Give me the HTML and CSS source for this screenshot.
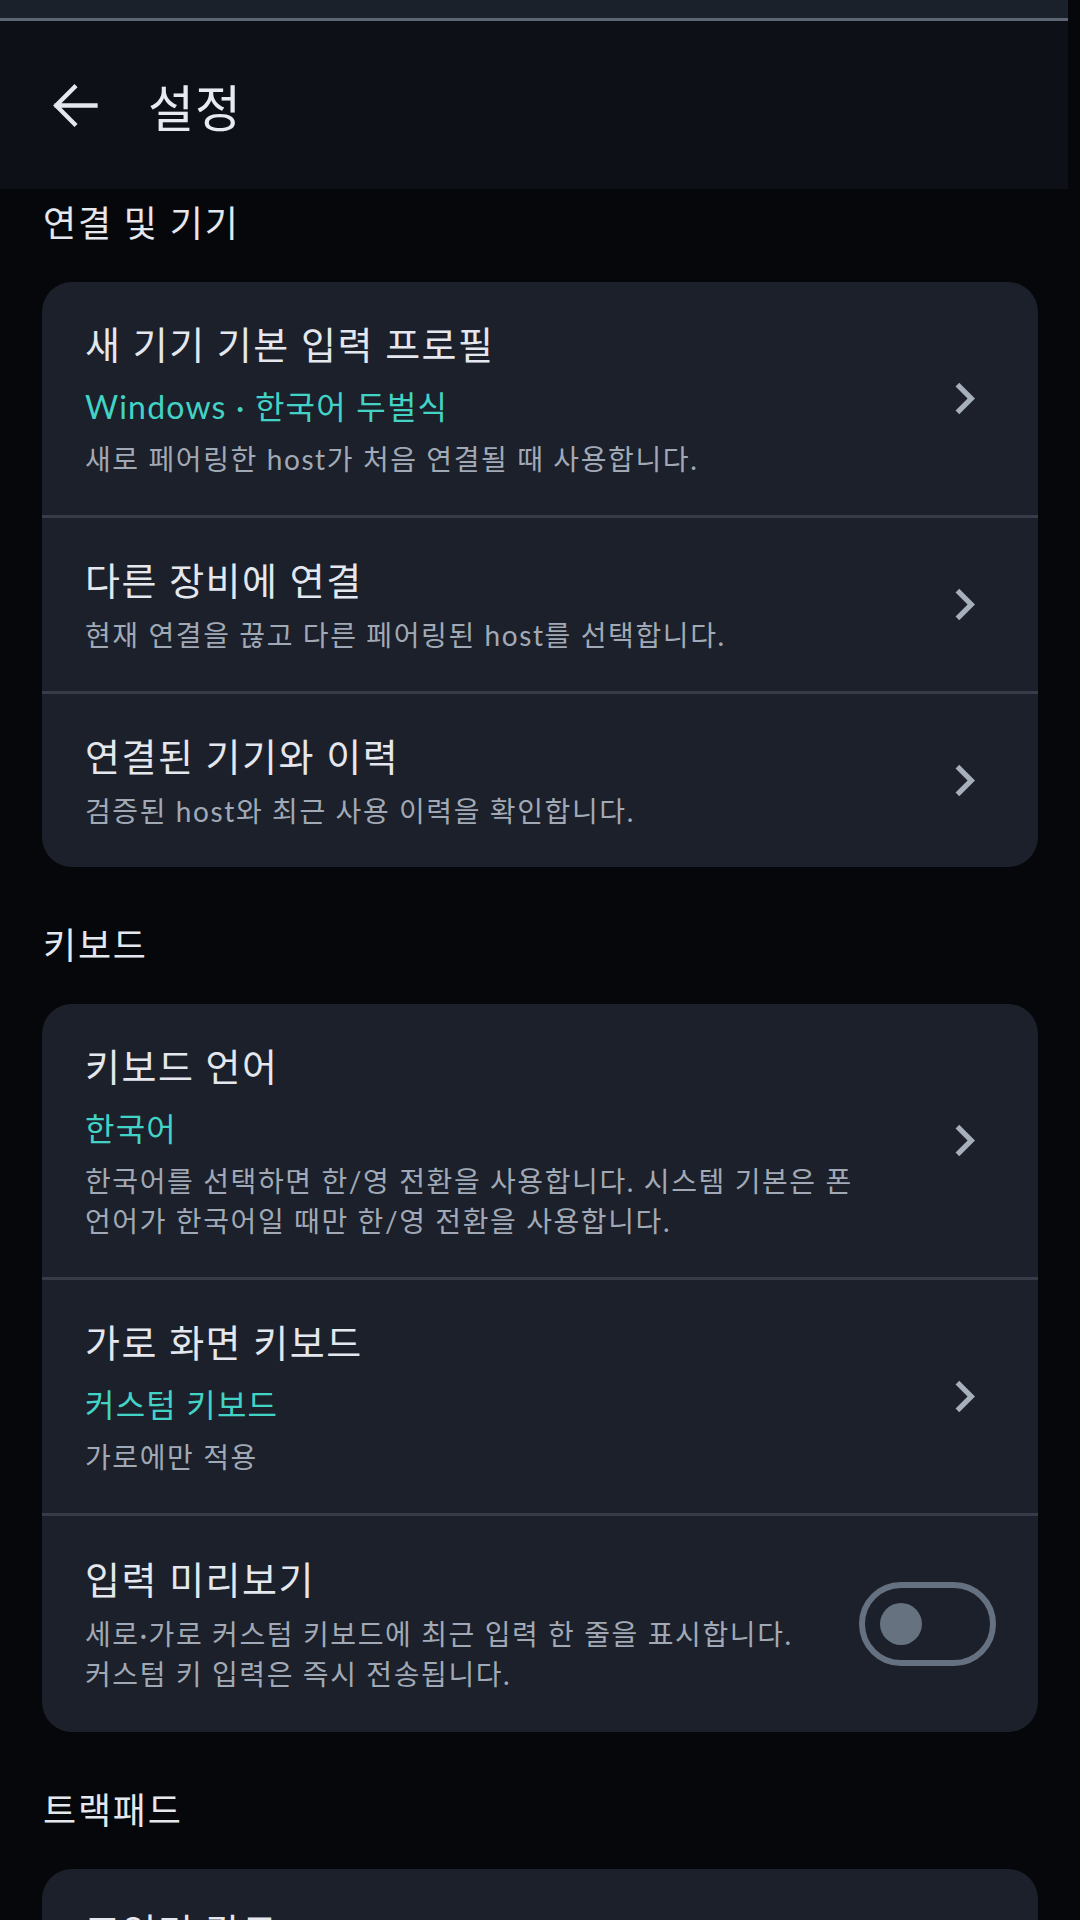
FILE: index.html
```html
<!DOCTYPE html>
<html lang="ko">
<head>
    <meta charset="UTF-8">
    <meta name="viewport" content="width=device-width, initial-scale=1.0">
    <title>설정</title>
    <link rel="stylesheet" href="styles.css">
</head>
<body>
    <div class="topbar">
        <div class="statusbar"></div>
        <header class="appbar">
            <button class="back" aria-label="뒤로">
                <svg viewBox="0 0 24 24" width="63" height="63">
                    <path d="M20 12H5.2M12 5l-7 7 7 7" fill="none" stroke="currentColor" stroke-width="1.65" stroke-linecap="square"/>
                </svg>
            </button>
            <h1>설정</h1>
        </header>
    </div>

    <main class="content">
        <section class="section">
            <h2 class="section-label">연결 및 기기</h2>
            <div class="card">
                <div class="row">
                    <div class="row-text">
                        <div class="row-title">새 기기 기본 입력 프로필</div>
                        <div class="row-value">Windows · 한국어 두벌식</div>
                        <div class="row-desc">새로 페어링한 host가 처음 연결될 때 사용합니다.</div>
                    </div>
                    <svg class="chevron" viewBox="0 0 24 24"><path d="M10 6L8.59 7.41 13.17 12l-4.58 4.59L10 18l6-6z"/></svg>
                </div>
                <div class="row">
                    <div class="row-text">
                        <div class="row-title">다른 장비에 연결</div>
                        <div class="row-desc">현재 연결을 끊고 다른 페어링된 host를 선택합니다.</div>
                    </div>
                    <svg class="chevron" viewBox="0 0 24 24"><path d="M10 6L8.59 7.41 13.17 12l-4.58 4.59L10 18l6-6z"/></svg>
                </div>
                <div class="row">
                    <div class="row-text">
                        <div class="row-title">연결된 기기와 이력</div>
                        <div class="row-desc">검증된 host와 최근 사용 이력을 확인합니다.</div>
                    </div>
                    <svg class="chevron" viewBox="0 0 24 24"><path d="M10 6L8.59 7.41 13.17 12l-4.58 4.59L10 18l6-6z"/></svg>
                </div>
            </div>
        </section>

        <section class="section">
            <h2 class="section-label">키보드</h2>
            <div class="card">
                <div class="row">
                    <div class="row-text">
                        <div class="row-title">키보드 언어</div>
                        <div class="row-value">한국어</div>
                        <div class="row-desc">한국어를 선택하면 한/영 전환을 사용합니다. 시스템 기본은 폰 언어가 한국어일 때만 한/영 전환을 사용합니다.</div>
                    </div>
                    <svg class="chevron" viewBox="0 0 24 24"><path d="M10 6L8.59 7.41 13.17 12l-4.58 4.59L10 18l6-6z"/></svg>
                </div>
                <div class="row">
                    <div class="row-text">
                        <div class="row-title">가로 화면 키보드</div>
                        <div class="row-value">커스텀 키보드</div>
                        <div class="row-desc">가로에만 적용</div>
                    </div>
                    <svg class="chevron" viewBox="0 0 24 24"><path d="M10 6L8.59 7.41 13.17 12l-4.58 4.59L10 18l6-6z"/></svg>
                </div>
                <div class="row toggle-row">
                    <div class="row-text">
                        <div class="row-title">입력 미리보기</div>
                        <div class="row-desc">세로·가로 커스텀 키보드에 최근 입력 한 줄을 표시합니다. 커스텀 키 입력은 즉시 전송됩니다.</div>
                    </div>
                    <div class="switch"><span class="knob"></span></div>
                </div>
            </div>
        </section>

        <section class="section">
            <h2 class="section-label">트랙패드</h2>
            <div class="card">
                <div class="row">
                    <div class="row-text">
                        <div class="row-title">포인터 감도</div>
                        <div class="row-desc">트랙패드에서 커서가 움직이는 속도를 조절합니다.</div>
                    </div>
                    <svg class="chevron" viewBox="0 0 24 24"><path d="M10 6L8.59 7.41 13.17 12l-4.58 4.59L10 18l6-6z"/></svg>
                </div>
            </div>
        </section>
    </main>
</body>
</html>
```

FILE: styles.css
```css
body {
    margin: 0;
    background-color: #05070b;
    font-family: 'Lato', 'Noto Sans CJK KR', sans-serif;
    color: #e4e7ee;
    word-break: keep-all;
}
.topbar {
    margin-right: 12px;
}
.statusbar {
    height: 18px;
    background-color: #1b212b;
    border-bottom: 3px solid #5d6572;
}
.appbar {
    height: 168px;
    display: flex;
    align-items: center;
    gap: 42px;
    padding-left: 43px;
    background-color: #0d1017;
}
.back {
    display: flex;
    padding: 0;
    border: none;
    background: none;
    color: #e4e7ee;
}
.appbar h1 {
    margin: 0;
    font-size: 50px;
    font-weight: 400;
    letter-spacing: 1px;
    color: #e7eaf1;
}
.content {
    padding: 10px 42px 40px;
}
.section + .section {
    margin-top: 54px;
}
.section-label {
    margin: 0 0 35px 1px;
    font-size: 36px;
    line-height: 48px;
    font-weight: 400;
    letter-spacing: 1.8px;
    color: #e4e7ee;
}
.card {
    background-color: #1b202a;
    border-radius: 30px;
    overflow: hidden;
}
.row {
    display: flex;
    align-items: center;
    gap: 32px;
    padding: 36px 42px 36px 43px;
}
.row + .row {
    border-top: 3px solid #353c47;
}
.toggle-row {
    padding-top: 37px;
    padding-bottom: 38px;
}
.row-text {
    flex: 1;
}
.row-title {
    font-size: 38px;
    line-height: 52px;
    letter-spacing: 1.5px;
    color: #e4e7ee;
}
.row-value {
    margin-top: 14px;
    font-size: 32px;
    line-height: 46px;
    letter-spacing: 1.2px;
    color: #43d3c6;
}
.row-desc {
    margin-top: 9px;
    font-size: 28px;
    line-height: 40px;
    letter-spacing: 1.6px;
    color: #a1a9b6;
}
.chevron {
    width: 63px;
    height: 63px;
    flex-shrink: 0;
    fill: #a6afbc;
}
.switch {
    width: 110px;
    height: 72px;
    flex-shrink: 0;
    border: 6px solid #657080;
    border-radius: 42px;
    display: flex;
    align-items: center;
    padding-left: 15px;
}
.knob {
    width: 42px;
    height: 42px;
    border-radius: 50%;
    background-color: #677281;
}
```
